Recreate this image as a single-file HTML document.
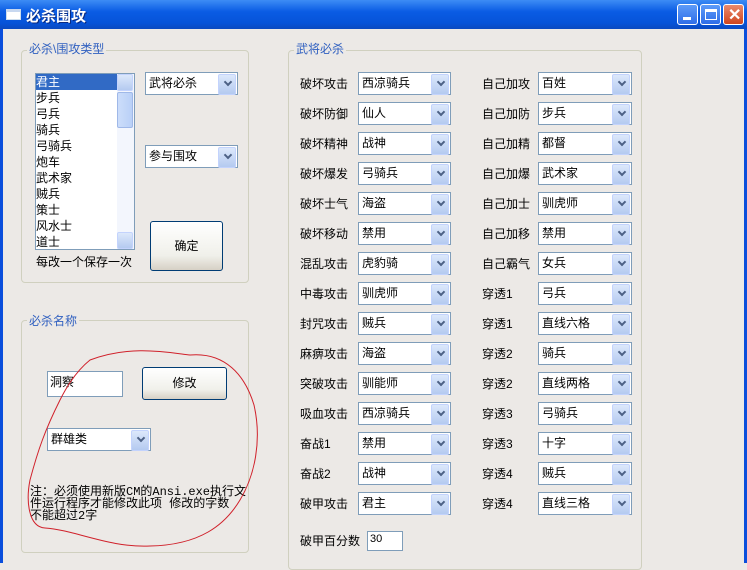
<!DOCTYPE html>
<html><head><meta charset="utf-8"><style>
*{margin:0;padding:0;box-sizing:border-box}
body{width:747px;height:563px;overflow:hidden;background:#ECE9E6;font-family:"Liberation Sans","Noto Sans CJK SC","WenQuanYi Zen Hei",sans-serif;font-size:12px;color:#000;position:relative}
.a{position:absolute}
.title{left:0;top:0;width:747px;height:29px;background:linear-gradient(#3D8CF5,#0A5CE4 40%,#0653D8 80%,#0A49C0);}
.title span{position:absolute;left:26px;top:5px;color:#fff;font-weight:bold;font-size:15px;text-shadow:1px 1px #0A2A80}
.ic{left:6px;top:9px;width:15px;height:11px;background:#fff;border:1px solid #cde;border-top:3px solid #c8d8f0}
.tb{top:4px;width:21px;height:21px;border:1px solid #fff;border-radius:3px;background:linear-gradient(#5D9BF8,#2E6DE8)}
.lb{left:0;top:29px;width:3px;height:534px;background:#0A4EDC}
.rb{left:744px;top:29px;width:3px;height:534px;background:#0A4EDC}
.grp{border:1px solid #D0D0BF;border-radius:4px}
.gl{background:#ECE9E6;color:#3060C0;padding:0 2px}
.cb{height:23px;background:#fff;border:1px solid #7F9DB9;padding:3px 0 0 3px;font-size:12px;line-height:14px}
.cb:after{content:"";position:absolute;right:1px;top:1px;width:16px;height:19px;background:linear-gradient(#DCE8FB,#B4CAF0);border-radius:2px;border:1px solid #C3D3FD}
.cb i{position:absolute;right:6px;top:6px;width:6px;height:6px;border-right:2px solid #4D6185;border-bottom:2px solid #4D6185;transform:rotate(45deg);z-index:2}
.btn{border:1px solid #003C74;border-radius:3px;background:linear-gradient(#fff,#F0F0EA 70%,#D6D0C5);text-align:center;font-size:12px}
.tx{background:#fff;border:1px solid #7F9DB9;padding:2px 2px;font-size:12px}
.lab{font-size:12px;line-height:14px}
</style></head><body>
<div class="a title"><div class="a ic"></div><span>必杀围攻</span>
<div class="a tb" style="left:677px"><div class="a" style="left:5px;top:12px;width:8px;height:3px;background:#fff"></div></div>
<div class="a tb" style="left:700px"><div class="a" style="left:4px;top:4px;width:12px;height:11px;border:1px solid #fff;border-top:3px solid #fff"></div></div>
<div class="a tb" style="left:723px;background:linear-gradient(#E98A6E,#D0451E)"><span style="left:4px;top:0px;font-size:16px;text-shadow:none">✕</span></div>
</div>
<div class="a lb"></div><div class="a rb"></div>

<div class="a grp" style="left:21px;top:50px;width:228px;height:233px"></div>
<div class="a gl" style="left:27px;top:40px">必杀\围攻类型</div>
<div class="a" style="left:35px;top:73px;width:100px;height:177px;background:#fff;border:1px solid #7F9DB9;font-size:12px;line-height:16px">
<div style="background:#316AC5;color:#fff;width:81px">君主</div><div>步兵</div><div>弓兵</div><div>骑兵</div><div>弓骑兵</div><div>炮车</div><div>武术家</div><div>贼兵</div><div>策士</div><div>风水士</div><div>道士</div>
<div class="a" style="right:0;top:0;width:17px;height:175px;background:#F3F6FD">
<div class="a" style="left:0;top:0;width:16px;height:17px;background:linear-gradient(#DCE8FB,#B4CAF0);border:1px solid #C3D3FD;border-radius:2px"></div>
<div class="a" style="left:0;top:18px;width:16px;height:36px;background:linear-gradient(90deg,#CCDDFA,#B9D0F7);border:1px solid #9FB8E8;border-radius:2px"></div>
<div class="a" style="left:0;top:158px;width:16px;height:17px;background:linear-gradient(#DCE8FB,#B4CAF0);border:1px solid #C3D3FD;border-radius:2px"></div>
</div></div>
<div class="a cb" style="left:145px;top:72px;width:93px">武将必杀<i></i></div>
<div class="a cb" style="left:145px;top:145px;width:93px">参与围攻<i></i></div>
<div class="a btn" style="left:150px;top:221px;width:73px;height:50px;line-height:48px">确定</div>
<div class="a lab" style="left:36px;top:255px">每改一个保存一次</div>

<div class="a grp" style="left:21px;top:320px;width:228px;height:233px"></div>
<div class="a gl" style="left:27px;top:312px">必杀名称</div>
<div class="a tx" style="left:47px;top:371px;width:76px;height:26px;padding-top:1px">洞察</div>
<div class="a btn" style="left:142px;top:367px;width:85px;height:33px;line-height:31px">修改</div>
<div class="a cb" style="left:47px;top:428px;width:104px">群雄类<i></i></div>
<div class="a" style="left:30px;top:486px;font-family:'Liberation Mono','Noto Sans CJK SC',monospace;font-size:12px;line-height:12px">注：必须使用新版CM的Ansi.exe执行文<br>件运行程序才能修改此项 修改的字数<br>不能超过2字</div>
<svg class="a" style="left:0;top:0" width="747" height="563"><path d="M90,360 C130,345 165,352 190,355 C225,352 245,375 254,405 C262,440 255,475 240,500 C225,525 200,545 150,546 C110,548 75,530 45,528 C28,527 26,500 30,480 C38,450 45,430 60,400 C70,380 80,368 90,360 Z" fill="none" stroke="#D0202A" stroke-width="1"/></svg>

<div class="a grp" style="left:288px;top:50px;width:354px;height:520px"></div>
<div class="a gl" style="left:294px;top:40px">武将必杀</div>

<div class="a lab" style="left:300px;top:77px">破坏攻击</div><div class="a cb" style="left:358px;top:72px;width:93px">西凉骑兵<i></i></div><div class="a lab" style="left:482px;top:77px">自己加攻</div><div class="a cb" style="left:538px;top:72px;width:94px">百姓<i></i></div>
<div class="a lab" style="left:300px;top:107px">破坏防御</div><div class="a cb" style="left:358px;top:102px;width:93px">仙人<i></i></div><div class="a lab" style="left:482px;top:107px">自己加防</div><div class="a cb" style="left:538px;top:102px;width:94px">步兵<i></i></div>
<div class="a lab" style="left:300px;top:137px">破坏精神</div><div class="a cb" style="left:358px;top:132px;width:93px">战神<i></i></div><div class="a lab" style="left:482px;top:137px">自己加精</div><div class="a cb" style="left:538px;top:132px;width:94px">都督<i></i></div>
<div class="a lab" style="left:300px;top:167px">破坏爆发</div><div class="a cb" style="left:358px;top:162px;width:93px">弓骑兵<i></i></div><div class="a lab" style="left:482px;top:167px">自己加爆</div><div class="a cb" style="left:538px;top:162px;width:94px">武术家<i></i></div>
<div class="a lab" style="left:300px;top:197px">破坏士气</div><div class="a cb" style="left:358px;top:192px;width:93px">海盗<i></i></div><div class="a lab" style="left:482px;top:197px">自己加士</div><div class="a cb" style="left:538px;top:192px;width:94px">驯虎师<i></i></div>
<div class="a lab" style="left:300px;top:227px">破坏移动</div><div class="a cb" style="left:358px;top:222px;width:93px">禁用<i></i></div><div class="a lab" style="left:482px;top:227px">自己加移</div><div class="a cb" style="left:538px;top:222px;width:94px">禁用<i></i></div>
<div class="a lab" style="left:300px;top:257px">混乱攻击</div><div class="a cb" style="left:358px;top:252px;width:93px">虎豹骑<i></i></div><div class="a lab" style="left:482px;top:257px">自己霸气</div><div class="a cb" style="left:538px;top:252px;width:94px">女兵<i></i></div>
<div class="a lab" style="left:300px;top:287px">中毒攻击</div><div class="a cb" style="left:358px;top:282px;width:93px">驯虎师<i></i></div><div class="a lab" style="left:482px;top:287px">穿透1</div><div class="a cb" style="left:538px;top:282px;width:94px">弓兵<i></i></div>
<div class="a lab" style="left:300px;top:317px">封咒攻击</div><div class="a cb" style="left:358px;top:312px;width:93px">贼兵<i></i></div><div class="a lab" style="left:482px;top:317px">穿透1</div><div class="a cb" style="left:538px;top:312px;width:94px">直线六格<i></i></div>
<div class="a lab" style="left:300px;top:347px">麻痹攻击</div><div class="a cb" style="left:358px;top:342px;width:93px">海盗<i></i></div><div class="a lab" style="left:482px;top:347px">穿透2</div><div class="a cb" style="left:538px;top:342px;width:94px">骑兵<i></i></div>
<div class="a lab" style="left:300px;top:377px">突破攻击</div><div class="a cb" style="left:358px;top:372px;width:93px">驯能师<i></i></div><div class="a lab" style="left:482px;top:377px">穿透2</div><div class="a cb" style="left:538px;top:372px;width:94px">直线两格<i></i></div>
<div class="a lab" style="left:300px;top:407px">吸血攻击</div><div class="a cb" style="left:358px;top:402px;width:93px">西凉骑兵<i></i></div><div class="a lab" style="left:482px;top:407px">穿透3</div><div class="a cb" style="left:538px;top:402px;width:94px">弓骑兵<i></i></div>
<div class="a lab" style="left:300px;top:437px">奋战1</div><div class="a cb" style="left:358px;top:432px;width:93px">禁用<i></i></div><div class="a lab" style="left:482px;top:437px">穿透3</div><div class="a cb" style="left:538px;top:432px;width:94px">十字<i></i></div>
<div class="a lab" style="left:300px;top:467px">奋战2</div><div class="a cb" style="left:358px;top:462px;width:93px">战神<i></i></div><div class="a lab" style="left:482px;top:467px">穿透4</div><div class="a cb" style="left:538px;top:462px;width:94px">贼兵<i></i></div>
<div class="a lab" style="left:300px;top:497px">破甲攻击</div><div class="a cb" style="left:358px;top:492px;width:93px">君主<i></i></div><div class="a lab" style="left:482px;top:497px">穿透4</div><div class="a cb" style="left:538px;top:492px;width:94px">直线三格<i></i></div>
<div class="a lab" style="left:300px;top:534px">破甲百分数</div><div class="a tx" style="left:367px;top:531px;width:36px;height:20px;font-size:11px;padding:1px 2px">30</div>
</body></html>
